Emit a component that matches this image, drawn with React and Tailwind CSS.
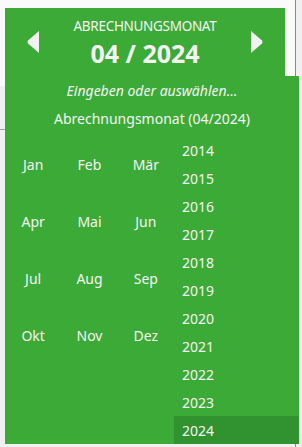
import React from "react";

const months = [
  ["Jan", "Feb", "Mär"],
  ["Apr", "Mai", "Jun"],
  ["Jul", "Aug", "Sep"],
  ["Okt", "Nov", "Dez"],
];
const years = [2014, 2015, 2016, 2017, 2018, 2019, 2020, 2021, 2022, 2023, 2024];

export default function App() {
  return (
    <div
      className="relative w-[302px] h-[447px] bg-[#f0f0f0] overflow-hidden"
      style={{ fontFamily: '"Noto Sans", "Open Sans", sans-serif' }}
    >
      {/* background page */}
      <div className="absolute left-0 top-0 w-[295px] h-[86px] bg-[#fafafa]" />
      <div className="absolute left-[295px] top-0 w-px h-[447px] bg-[#8a8a8a]" />
      <div className="absolute left-0 top-[129px] w-[10px] h-px bg-[#a0a0a0]" />

      {/* popup */}
      <div className="absolute left-[5px] top-[8px] flex flex-col text-[#f4f4f4]">
        <div className="w-[280px] h-[68px] bg-[#3caa36] flex items-center justify-between px-[22px]">
          <svg width="12" height="22" viewBox="0 0 12 22">
            <path d="M12 0 L12 22 L1 12.5 Q0 11 1 9.5 Z" fill="#f2f2f2" />
          </svg>
          <div className="flex flex-col items-center leading-none pt-[2px]">
            <div className="text-[13.5px] tracking-[-0.3px]">ABRECHNUNGSMONAT</div>
            <div className="text-[25px] font-bold mt-[7px]">04 / 2024</div>
          </div>
          <svg width="12" height="22" viewBox="0 0 12 22">
            <path d="M0 0 L0 22 L11 12.5 Q12 11 11 9.5 Z" fill="#f2f2f2" />
          </svg>
        </div>
        <div className="w-[294px] h-[368px] bg-[#3caa36] flex flex-col">
          <div className="h-[60px] flex flex-col items-center pt-[6px]">
            <div className="text-[14px] italic leading-[18px]">Eingeben oder auswählen...</div>
            <div className="text-[14px] leading-[18px] mt-[10px]">Abrechnungsmonat (04/2024)</div>
          </div>
          <div className="flex flex-1">
            <div className="w-[169px] grid grid-cols-3 auto-rows-[57px] content-start">
              {months.flat().map((m) => (
                <div key={m} className="flex items-center justify-center text-[14px]">
                  {m}
                </div>
              ))}
            </div>
            <div className="flex-1 flex flex-col">
              {years.map((y) => (
                <div
                  key={y}
                  className={
                    "h-[28px] flex items-center pl-[8px] text-[14px] " +
                    (y === 2024 ? "bg-[#31932f]" : "")
                  }
                >
                  {y}
                </div>
              ))}
            </div>
          </div>
        </div>
      </div>
    </div>
  );
}
